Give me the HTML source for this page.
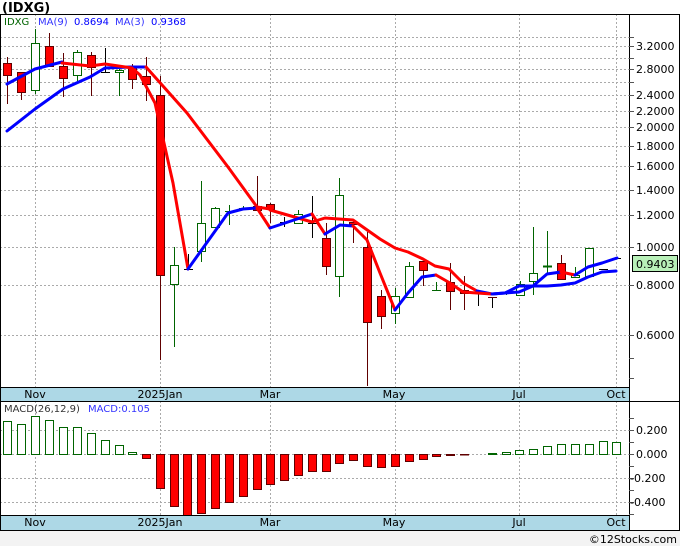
<!DOCTYPE html>
<html><head><meta charset="utf-8"><style>
body{margin:0;width:680px;height:546px;overflow:hidden;background:#fff;font-family:"DejaVu Sans","Liberation Sans",sans-serif}
svg{display:block}
</style></head><body>
<svg width="680" height="546" viewBox="0 0 680 546" xmlns="http://www.w3.org/2000/svg" font-family="DejaVu Sans, Liberation Sans, sans-serif">
<rect x="0" y="0" width="680" height="546" fill="#fff"/>
<rect x="0" y="530" width="680" height="16" fill="#f3f3f3"/>
<text x="2" y="12" font-size="13" font-weight="bold" fill="#000">(IDXG)</text>
<!-- main grid -->
<g stroke="#aaa" stroke-dasharray="2,2" stroke-width="1">
<line x1="0" x2="629" y1="37.5" y2="37.5"/><line x1="0" x2="629" y1="46.5" y2="46.5"/><line x1="0" x2="629" y1="58.5" y2="58.5"/><line x1="0" x2="629" y1="69.5" y2="69.5"/><line x1="0" x2="629" y1="82.5" y2="82.5"/><line x1="0" x2="629" y1="95.5" y2="95.5"/><line x1="0" x2="629" y1="111.5" y2="111.5"/><line x1="0" x2="629" y1="127.5" y2="127.5"/><line x1="0" x2="629" y1="146.5" y2="146.5"/><line x1="0" x2="629" y1="166.5" y2="166.5"/><line x1="0" x2="629" y1="190.5" y2="190.5"/><line x1="0" x2="629" y1="215.5" y2="215.5"/><line x1="0" x2="629" y1="247.5" y2="247.5"/><line x1="0" x2="629" y1="285.5" y2="285.5"/><line x1="0" x2="629" y1="335.5" y2="335.5"/>
<line x1="35.5" x2="35.5" y1="14" y2="387"/><line x1="160.5" x2="160.5" y1="14" y2="387"/><line x1="270.5" x2="270.5" y1="14" y2="387"/><line x1="395.5" x2="395.5" y1="14" y2="387"/><line x1="519.5" x2="519.5" y1="14" y2="387"/><line x1="616.5" x2="616.5" y1="14" y2="387"/>
<line x1="0" x2="629" y1="430.5" y2="430.5"/><line x1="0" x2="629" y1="454.5" y2="454.5"/><line x1="0" x2="629" y1="478.5" y2="478.5"/><line x1="0" x2="629" y1="502.5" y2="502.5"/>
<line x1="35.5" x2="35.5" y1="401" y2="515"/><line x1="160.5" x2="160.5" y1="401" y2="515"/><line x1="270.5" x2="270.5" y1="401" y2="515"/><line x1="395.5" x2="395.5" y1="401" y2="515"/><line x1="519.5" x2="519.5" y1="401" y2="515"/><line x1="616.5" x2="616.5" y1="401" y2="515"/>
</g>
<!-- candles -->
<g stroke-width="1">
<g stroke="#600000" fill="#f00">
<line x1="7.5" x2="7.5" y1="57" y2="104"/><rect x="3.5" y="63.5" width="8" height="12"/>
<line x1="21.5" x2="21.5" y1="72" y2="100"/><rect x="17.5" y="72.5" width="8" height="20"/>
<line x1="49.5" x2="49.5" y1="33" y2="66"/><rect x="45.5" y="46.5" width="8" height="20"/>
<line x1="63.5" x2="63.5" y1="53" y2="97"/><rect x="59.5" y="66.5" width="8" height="12"/>
<line x1="91.5" x2="91.5" y1="52" y2="96"/><rect x="87.5" y="55.5" width="8" height="12"/>
<line x1="132.5" x2="132.5" y1="64" y2="89"/><rect x="128.5" y="67.5" width="8" height="12"/>
<line x1="146.5" x2="146.5" y1="57" y2="101"/><rect x="142.5" y="76.5" width="8" height="8"/>
<line x1="160.5" x2="160.5" y1="76" y2="360"/><rect x="156.5" y="95.5" width="8" height="180"/>
<line x1="257.5" x2="257.5" y1="176" y2="210"/><rect x="253.5" y="206.5" width="8" height="4"/>
<line x1="270.5" x2="270.5" y1="203" y2="223"/><rect x="266.5" y="204.5" width="8" height="5"/>
<line x1="326.5" x2="326.5" y1="223" y2="275"/><rect x="322.5" y="238.5" width="8" height="28"/>
<line x1="353.5" x2="353.5" y1="220" y2="243"/><rect x="349.5" y="222.5" width="8" height="2"/>
<line x1="367.5" x2="367.5" y1="232" y2="386"/><rect x="363.5" y="247.5" width="8" height="75"/>
<line x1="381.5" x2="381.5" y1="290" y2="329"/><rect x="377.5" y="296.5" width="8" height="20"/>
<line x1="423.5" x2="423.5" y1="261" y2="286"/><rect x="419.5" y="261.5" width="8" height="9"/>
<line x1="450.5" x2="450.5" y1="263" y2="310"/><rect x="446.5" y="282.5" width="8" height="9"/>
<line x1="464.5" x2="464.5" y1="276" y2="310"/><rect x="460.5" y="290.5" width="8" height="3"/>
<line x1="561.5" x2="561.5" y1="255" y2="279"/><rect x="557.5" y="263.5" width="8" height="16"/>
</g>
<g stroke="#006400" fill="#fff">
<line x1="35.5" x2="35.5" y1="29" y2="94"/><rect x="31.5" y="43.5" width="8" height="47"/>
<line x1="77.5" x2="77.5" y1="50" y2="81"/><rect x="73.5" y="52.5" width="8" height="23"/>
<line x1="119.5" x2="119.5" y1="69" y2="96"/><rect x="115.5" y="70.5" width="8" height="2"/>
<line x1="174.5" x2="174.5" y1="247" y2="347"/><rect x="170.5" y="265.5" width="8" height="19"/>
<line x1="201.5" x2="201.5" y1="181" y2="262"/><rect x="197.5" y="223.5" width="8" height="28"/>
<line x1="215.5" x2="215.5" y1="207" y2="227"/><rect x="211.5" y="208.5" width="8" height="19"/>
<line x1="229.5" x2="229.5" y1="205" y2="225"/><line x1="225" x2="234" y1="211.5" y2="211.5"/>
<line x1="243.5" x2="243.5" y1="206" y2="210"/><line x1="239" x2="248" y1="208.5" y2="208.5"/>
<line x1="298.5" x2="298.5" y1="210" y2="223"/><rect x="294.5" y="214.5" width="8" height="9"/>
<line x1="339.5" x2="339.5" y1="178" y2="297"/><rect x="335.5" y="195.5" width="8" height="81"/>
<line x1="395.5" x2="395.5" y1="288" y2="324"/><rect x="391.5" y="296.5" width="8" height="17"/>
<line x1="409.5" x2="409.5" y1="262" y2="297"/><rect x="405.5" y="266.5" width="8" height="31"/>
<line x1="436.5" x2="436.5" y1="282" y2="290"/><line x1="432" x2="441" y1="290.5" y2="290.5"/>
<line x1="506.5" x2="506.5" y1="291" y2="295"/><line x1="502" x2="511" y1="293.5" y2="293.5"/>
<line x1="520.5" x2="520.5" y1="281" y2="295"/><rect x="516.5" y="284.5" width="8" height="11"/>
<line x1="533.5" x2="533.5" y1="227" y2="295"/><rect x="529.5" y="273.5" width="8" height="8"/>
<line x1="547.5" x2="547.5" y1="231" y2="273"/><line x1="543" x2="552" y1="266.5" y2="266.5" stroke-width="2"/>
<line x1="575.5" x2="575.5" y1="267" y2="277"/><rect x="571.5" y="275.5" width="8" height="2"/>
<line x1="589.5" x2="589.5" y1="248" y2="276"/><rect x="585.5" y="248.5" width="8" height="28"/>
</g>
<g stroke="#000">
<line x1="105.5" x2="105.5" y1="48" y2="73"/><line x1="101" x2="110" y1="72.5" y2="72.5"/>
<line x1="188.5" x2="188.5" y1="254" y2="270"/><line x1="184" x2="193" y1="269.5" y2="269.5"/>
<line x1="284.5" x2="284.5" y1="217" y2="227"/><line x1="280" x2="289" y1="222.5" y2="222.5"/>
<line x1="312.5" x2="312.5" y1="196" y2="238"/><line x1="308" x2="317" y1="223.5" y2="223.5"/>
<line x1="478.5" x2="478.5" y1="293" y2="306"/><line x1="474" x2="483" y1="293.5" y2="293.5"/>
<line x1="492.5" x2="492.5" y1="297" y2="308"/><line x1="488" x2="497" y1="297.5" y2="297.5" stroke="#600000"/>
<line x1="599" x2="608" y1="269.5" y2="269.5"/><line x1="612" x2="621" y1="258.5" y2="258.5"/>
</g>
</g>
<!-- MA lines -->
<g fill="none" stroke-width="3" stroke-linejoin="round" stroke-linecap="round">
<polyline stroke="#0000ff" points="7,131 35,109 63,89 90,77 105,68 132,67 146,67"/>
<polyline stroke="#ff0000" points="146,67 187,113 228,167 257,207 270,209"/>
<polyline stroke="#ff0000" points="270,210 312,222 325,218 353,220 380,239 395,248 408,252 423,259 435,266 449,269 463,283 477,291"/>
<polyline stroke="#0000ff" points="477,291 492,294 505,293 519,286 533,286 547,286 561,285 575,283 588,277 602,272 616,271"/>
<polyline stroke="#0000ff" points="7,84 35,69 62,62"/>
<polyline stroke="#ff0000" points="62,63 90,66 105,64 132,68 140,75 155,103 173,183 188,269"/>
<polyline stroke="#0000ff" points="188,269 228,213 243,209 257,208"/>
<polyline stroke="#ff0000" points="257,208 270,228"/>
<polyline stroke="#0000ff" points="270,228 312,214"/>
<polyline stroke="#ff0000" points="312,214 325,234"/>
<polyline stroke="#0000ff" points="325,234 340,225 353,226"/>
<polyline stroke="#ff0000" points="353,226 367,240 380,273 395,310"/>
<polyline stroke="#0000ff" points="395,310 408,293 422,277 436,275"/>
<polyline stroke="#ff0000" points="436,275 450,283 463,292 477,293 492,294"/>
<polyline stroke="#0000ff" points="492,294 505,293 519,292 533,286 547,274 561,272"/>
<polyline stroke="#ff0000" points="561,272 575,275"/>
<polyline stroke="#0000ff" points="575,275 588,267 602,263 617,258"/>
</g>
<text x="4" y="25" font-size="10" fill="#006400">IDXG</text>
<text x="38" y="25" font-size="10" fill="#3333ff">MA(9)</text>
<text x="74" y="25" font-size="10" fill="#0000ff">0.8694</text>
<text x="115" y="25" font-size="10" fill="#3333ff">MA(3)</text>
<text x="151" y="25" font-size="10" fill="#0000ff">0.9368</text>
<!-- MACD bars -->
<g stroke="#006400" fill="#fff">
<rect x="3.5" y="421.5" width="8" height="33"/><rect x="17.5" y="424.5" width="8" height="30"/><rect x="31.5" y="416.5" width="8" height="38"/><rect x="45.5" y="420.5" width="8" height="34"/><rect x="59.5" y="427.5" width="8" height="27"/><rect x="73.5" y="427.5" width="8" height="27"/><rect x="87.5" y="433.5" width="8" height="21"/><rect x="101.5" y="440.5" width="8" height="14"/><rect x="115.5" y="445.5" width="8" height="9"/><rect x="128.5" y="452.5" width="8" height="2"/>
<rect x="488.5" y="453.5" width="8" height="1" fill="#006400"/><rect x="502.5" y="452.5" width="8" height="2"/><rect x="515.5" y="450.5" width="8" height="4"/><rect x="529.5" y="449.5" width="8" height="5"/><rect x="543.5" y="446.5" width="8" height="8"/><rect x="557.5" y="444.5" width="8" height="10"/><rect x="571.5" y="444.5" width="8" height="10"/><rect x="585.5" y="444.5" width="8" height="10"/><rect x="599.5" y="441.5" width="8" height="13"/><rect x="612.5" y="442.5" width="8" height="12"/>
</g>
<g stroke="#600000" fill="#f00">
<rect x="142.5" y="454.5" width="8" height="4"/><rect x="156.5" y="454.5" width="8" height="34"/><rect x="170.5" y="454.5" width="8" height="52"/><rect x="183.5" y="454.5" width="8" height="62"/><rect x="197.5" y="454.5" width="8" height="59"/><rect x="211.5" y="454.5" width="8" height="54"/><rect x="225.5" y="454.5" width="8" height="48"/><rect x="239.5" y="454.5" width="8" height="42"/><rect x="253.5" y="454.5" width="8" height="35"/><rect x="266.5" y="454.5" width="8" height="30"/><rect x="280.5" y="454.5" width="8" height="26"/><rect x="294.5" y="454.5" width="8" height="21"/><rect x="308.5" y="454.5" width="8" height="17"/><rect x="322.5" y="454.5" width="8" height="17"/><rect x="335.5" y="454.5" width="8" height="9"/><rect x="349.5" y="454.5" width="8" height="6"/><rect x="363.5" y="454.5" width="8" height="12"/><rect x="377.5" y="454.5" width="8" height="13"/><rect x="391.5" y="454.5" width="8" height="12"/><rect x="405.5" y="454.5" width="8" height="7"/><rect x="419.5" y="454.5" width="8" height="5"/><rect x="432.5" y="454.5" width="8" height="2"/><rect x="446.5" y="454.5" width="8" height="1"/><rect x="460.5" y="454.5" width="8" height="0.5"/>
</g>
<text x="4" y="412" font-size="10" fill="#333">MACD(26,12,9)</text>
<text x="88" y="412" font-size="10" fill="#3333ff">MACD:0.105</text>
<!-- axis bands -->
<rect x="0" y="387" width="629" height="14" fill="#add8e6"/>
<rect x="0" y="515" width="629" height="15" fill="#add8e6"/>
<g stroke="#000" stroke-width="1">
<line x1="0" x2="680" y1="14.5" y2="14.5"/>
<line x1="0" x2="629" y1="387.5" y2="387.5"/>
<line x1="0" x2="680" y1="401.5" y2="401.5"/>
<line x1="0" x2="629" y1="515.5" y2="515.5"/>
<line x1="0" x2="680" y1="530.5" y2="530.5"/>
<line x1="629.5" x2="629.5" y1="14" y2="530"/>
<line x1="0.5" x2="0.5" y1="14" y2="530"/>
<line x1="679.5" x2="679.5" y1="14" y2="530"/>
</g>
<g stroke="#555" stroke-width="1">
<line x1="629" x2="634" y1="37.5" y2="37.5"/><line x1="629" x2="634" y1="46.5" y2="46.5"/><line x1="629" x2="634" y1="58.5" y2="58.5"/><line x1="629" x2="634" y1="69.5" y2="69.5"/><line x1="629" x2="634" y1="82.5" y2="82.5"/><line x1="629" x2="634" y1="95.5" y2="95.5"/><line x1="629" x2="634" y1="111.5" y2="111.5"/><line x1="629" x2="634" y1="127.5" y2="127.5"/><line x1="629" x2="634" y1="146.5" y2="146.5"/><line x1="629" x2="634" y1="166.5" y2="166.5"/><line x1="629" x2="634" y1="190.5" y2="190.5"/><line x1="629" x2="634" y1="215.5" y2="215.5"/><line x1="629" x2="634" y1="247.5" y2="247.5"/><line x1="629" x2="634" y1="285.5" y2="285.5"/><line x1="629" x2="634" y1="335.5" y2="335.5"/><line x1="629" x2="634" y1="358.5" y2="358.5"/><line x1="629" x2="634" y1="378.5" y2="378.5"/>
<line x1="629" x2="634" y1="418.5" y2="418.5"/><line x1="629" x2="634" y1="430.5" y2="430.5"/><line x1="629" x2="634" y1="442.5" y2="442.5"/><line x1="629" x2="634" y1="454.5" y2="454.5"/><line x1="629" x2="634" y1="466.5" y2="466.5"/><line x1="629" x2="634" y1="478.5" y2="478.5"/><line x1="629" x2="634" y1="490.5" y2="490.5"/><line x1="629" x2="634" y1="502.5" y2="502.5"/><line x1="629" x2="634" y1="514.5" y2="514.5"/>
</g>
<g font-size="11" fill="#000">
<text x="636" y="50">3.2000</text><text x="636" y="73">2.8000</text><text x="636" y="99">2.4000</text><text x="636" y="115">2.2000</text><text x="636" y="131">2.0000</text><text x="636" y="150">1.8000</text><text x="636" y="170">1.6000</text><text x="636" y="194">1.4000</text><text x="636" y="219">1.2000</text><text x="636" y="251">1.0000</text><text x="636" y="289">0.8000</text><text x="636" y="339">0.6000</text>
<text x="636" y="434">0.200</text><text x="636" y="458">0.000</text><text x="630" y="482">-0.200</text><text x="630" y="506">-0.400</text>
</g>
<rect x="632.5" y="255.5" width="45" height="16" fill="#b8f0b8" stroke="#000"/>
<text x="636" y="268" font-size="11" fill="#000">0.9403</text>
<g font-size="11" fill="#000" text-anchor="middle">
<text x="35" y="398">Nov</text><text x="160" y="398">2025Jan</text><text x="270" y="398">Mar</text><text x="394" y="398">May</text><text x="519" y="398">Jul</text><text x="616" y="398">Oct</text>
<text x="35" y="526">Nov</text><text x="160" y="526">2025Jan</text><text x="270" y="526">Mar</text><text x="394" y="526">May</text><text x="519" y="526">Jul</text><text x="616" y="526">Oct</text>
</g>
<text x="677" y="543" font-size="11" fill="#000" text-anchor="end">©12Stocks.com</text>
</svg>
</body></html>
